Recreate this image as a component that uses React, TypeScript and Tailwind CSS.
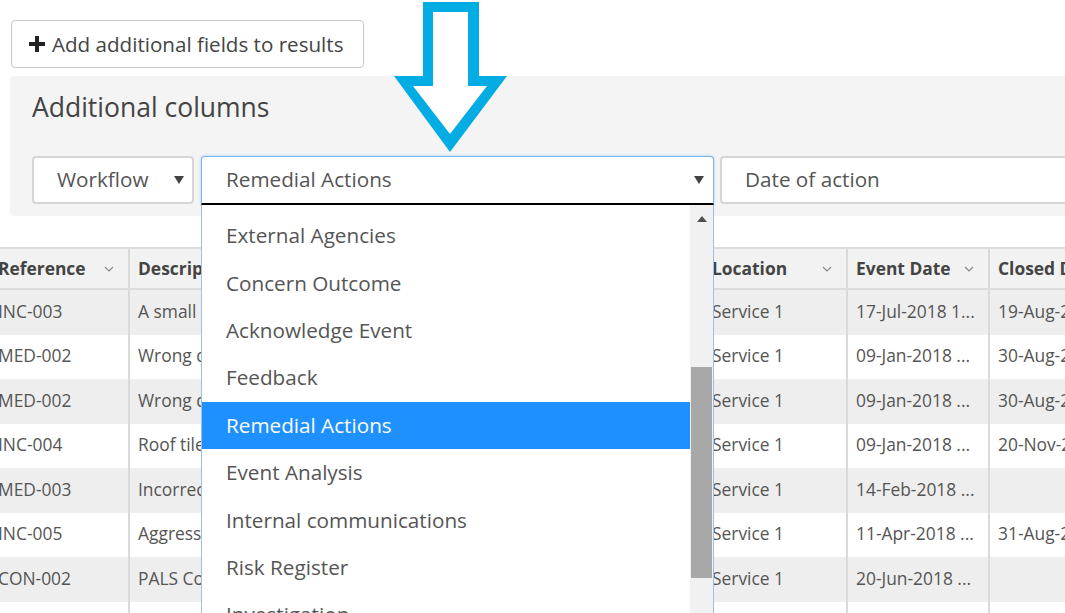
import React from 'react';

// Additional columns picker with the workflow dropdown opened over the results grid.

const FONT = { fontFamily: '"Open Sans", "Noto Sans", sans-serif' };

const OPTIONS = [
  'External Agencies',
  'Concern Outcome',
  'Acknowledge Event',
  'Feedback',
  'Remedial Actions',
  'Event Analysis',
  'Internal communications',
  'Risk Register',
  'Investigation',
];

const ROWS = [
  { ref: 'INC-003', desc: 'A small fire', loc: 'Service 1', event: '17-Jul-2018 1...', closed: '19-Aug-2018' },
  { ref: 'MED-002', desc: 'Wrong dose', loc: 'Service 1', event: '09-Jan-2018 ...', closed: '30-Aug-2018' },
  { ref: 'MED-002', desc: 'Wrong dose', loc: 'Service 1', event: '09-Jan-2018 ...', closed: '30-Aug-2018' },
  { ref: 'INC-004', desc: 'Roof tiles', loc: 'Service 1', event: '09-Jan-2018 ...', closed: '20-Nov-2018' },
  { ref: 'MED-003', desc: 'Incorrect', loc: 'Service 1', event: '14-Feb-2018 ...', closed: '' },
  { ref: 'INC-005', desc: 'Aggression', loc: 'Service 1', event: '11-Apr-2018 ...', closed: '31-Aug-2018' },
  { ref: 'CON-002', desc: 'PALS Concern', loc: 'Service 1', event: '20-Jun-2018 ...', closed: '' },
  { ref: '', desc: '', loc: '', event: '', closed: '' },
];

function Caret() {
  return (
    <svg width="10" height="8" viewBox="0 0 10 8" className="shrink-0">
      <path d="M0 0 H10 L5 8 Z" fill="#444" />
    </svg>
  );
}

function Chevron() {
  return (
    <svg width="10" height="6" viewBox="0 0 10 6" className="mr-[6px] shrink-0">
      <path d="M1 1 L5 5 L9 1" fill="none" stroke="#888" strokeWidth="1.2" />
    </svg>
  );
}

function Arrow() {
  return (
    <svg
      width="120"
      height="156"
      viewBox="390 0 120 156"
      className="pointer-events-none absolute left-[390px] top-0 z-30"
    >
      <polygon points="423,2 479,2 479,76 507,76 450,152 394,76 423,76" fill="#03ade3" />
      <polygon points="433,12 468,12 468,86 487,86 450,134 413,86 433,86" fill="#ffffff" />
    </svg>
  );
}

function Dropdown() {
  return (
    <div className="absolute left-0 top-full z-20 flex h-[420px] w-[513px] border-x border-[#9fbde6] bg-white">
      <div className="flex-1 pt-[7px]">
        {OPTIONS.map((o) => (
          <div
            key={o}
            className={`flex h-[47.4px] items-center whitespace-nowrap pl-[24px] text-[20.7px] ${
              o === 'Remedial Actions' ? 'bg-[#1e90ff] text-white' : 'text-[#555]'
            }`}
          >
            {o}
          </div>
        ))}
      </div>
      <div className="flex w-[23px] shrink-0 flex-col items-center bg-[#f1f1f1]">
        <svg width="10" height="6" viewBox="0 0 10 6" className="mt-[11px]">
          <path d="M0 6 L5 0 L10 6 Z" fill="#505050" />
        </svg>
        <div className="mt-[145px] h-[211px] w-[21px] bg-[#a8a8a8]" />
      </div>
    </div>
  );
}

function Cell({ w, children, head, last }: { w: string; children?: React.ReactNode; head?: boolean; last?: boolean }) {
  return (
    <div
      className={`flex shrink-0 items-center justify-between overflow-hidden whitespace-nowrap px-2 ${w} ${
        last ? '' : 'border-r-2 border-[#dadada]'
      } ${head ? 'font-bold text-[#444]' : 'pb-[3px] text-[#555]'}`}
    >
      {children}
    </div>
  );
}

export default function App() {
  return (
    <div className="relative h-[613px] w-full overflow-hidden bg-white" style={FONT}>
      <Arrow />

      <button className="ml-[11px] mt-[20px] flex h-[48px] w-[353px] items-center gap-[7px] rounded-[4px] border border-[#c8c8c8] bg-white pl-[17px] text-[20.6px] text-[#444]">
        <svg width="16" height="16" viewBox="0 0 16 16">
          <path d="M6 0 H10 V6 H16 V10 H10 V16 H6 V10 H0 V6 H6 Z" fill="#222" />
        </svg>
        Add additional fields to results
      </button>

      {/* Additional columns panel */}
      <div className="ml-[10px] mt-[8px] h-[140px] overflow-visible rounded-l-[4px] bg-[#f4f4f4] pl-[22px] pt-[12px]">
        <h2 className="h-[38px] text-[26.5px] leading-[38px] text-[#444]">Additional columns</h2>
        <div className="mt-[30px] flex gap-[6px]">
          <div className="flex h-[48px] w-[162px] shrink-0 items-center justify-between rounded-[4px] border-2 border-[#d6d6d6] bg-white pl-[23px] pr-[8px] text-[20.7px] text-[#555]">
            Workflow
            <Caret />
          </div>
          <div className="relative ml-[1px] shrink-0">
            <div className="flex h-[49px] w-[513px] items-center justify-between rounded-t-[4px] border border-b-2 border-[#7db5ee] border-b-black bg-white pl-[24px] pr-[9px] text-[20.7px] text-[#555] shadow-[0_0_3px_#9cc8f3]">
              Remedial Actions
              <Caret />
            </div>
            <Dropdown />
          </div>
          <div className="flex h-[48px] w-[420px] shrink-0 items-center rounded-[4px] border-2 border-[#d6d6d6] bg-white pl-[23px] text-[20.7px] text-[#555]">
            Date of action
          </div>
        </div>
      </div>

      {/* Results grid */}
      <div className="mt-[31px] ml-[-10px] text-[17.4px]">
        <div className="flex h-[43px] w-[1200px] border-y-2 border-[#dcdcdc] bg-[#f2f2f2]">
          <Cell w="w-[140px]" head>
            Reference <Chevron />
          </Cell>
          <Cell w="w-[574px]" head>
            Description
          </Cell>
          <Cell w="w-[144px]" head>
            Location <Chevron />
          </Cell>
          <Cell w="w-[142px]" head>
            Event Date <Chevron />
          </Cell>
          <Cell w="w-[150px]" head last>
            Closed Date
          </Cell>
        </div>
        {ROWS.map((r, i) => (
          <div key={i} className={`flex h-[44.5px] w-[1200px] ${i % 2 === 0 ? 'bg-[#eeeeee]' : 'bg-white'}`}>
            <Cell w="w-[140px]">{r.ref}</Cell>
            <Cell w="w-[574px]">{r.desc}</Cell>
            <Cell w="w-[144px]">{r.loc}</Cell>
            <Cell w="w-[142px]">{r.event}</Cell>
            <Cell w="w-[150px]" last>
              {r.closed}
            </Cell>
          </div>
        ))}
      </div>
    </div>
  );
}
